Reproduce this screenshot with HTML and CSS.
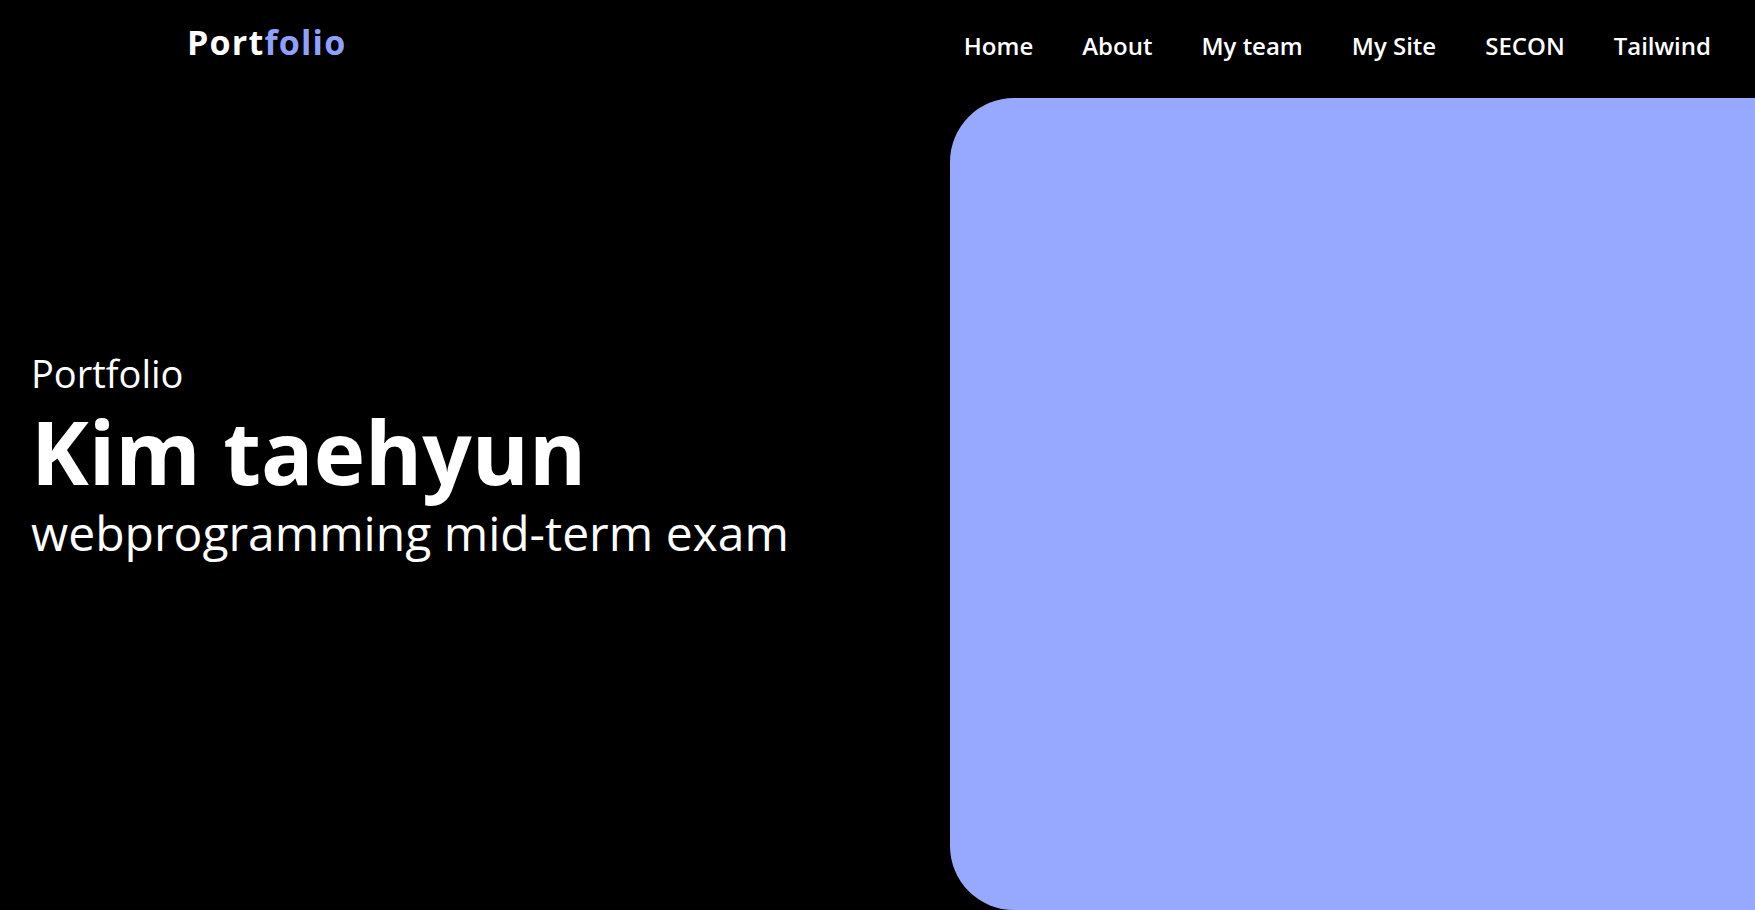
FILE: index.html
```html
<!DOCTYPE html>
<html lang="en">
<head>
<meta charset="utf-8">
<title>Portfolio</title>
<link rel="stylesheet" href="styles.css">
</head>
<body>
<header class="header">
  <a class="logo" href="#">Port<span class="logo-accent">folio</span></a>
  <nav class="nav">
    <a class="nav-link" href="#">Home</a>
    <a class="nav-link" href="#">About</a>
    <a class="nav-link" href="#">My team</a>
    <a class="nav-link" href="#">My Site</a>
    <a class="nav-link" href="#">SECON</a>
    <a class="nav-link" href="#">Tailwind</a>
  </nav>
</header>
<main class="hero">
  <section class="hero-text">
    <p class="hero-kicker">Portfolio</p>
    <h1 class="hero-name">Kim taehyun</h1>
    <p class="hero-sub">webprogramming mid-term exam</p>
  </section>
  <div class="hero-card"></div>
</main>
</body>
</html>
```

FILE: styles.css
```css
* { box-sizing: border-box; }
html, body {
  margin: 0;
  padding: 0;
  background: #000;
  color: #fff;
  font-family: "Open Sans", "Noto Sans", sans-serif;
  overflow: hidden;
}
.header {
  height: 98px;
  display: flex;
  align-items: baseline;
  justify-content: space-between;
  padding: 25px 44px 0 187px;
}
.logo {
  font-size: 34px;
  line-height: 1;
  font-weight: 700;
  letter-spacing: 1.2px;
  color: #fff;
  text-decoration: none;
}
.logo-accent { color: #8fa1ff; }
.nav {
  display: flex;
  gap: 49px;
}
.nav-link {
  font-size: 24px;
  line-height: 1;
  font-weight: 600;
  color: #fff;
  text-decoration: none;
}
.hero {
  display: grid;
  grid-template-columns: 950px 1fr;
  height: 812px;
}
.hero-text {
  padding: 256px 0 0 31px;
}
.hero-kicker {
  margin: 0;
  font-size: 38px;
  line-height: 1;
  font-weight: 400;
}
.hero-name {
  margin: 16px 0 0;
  font-size: 87px;
  line-height: 1;
  font-weight: 700;
}
.hero-sub {
  margin: 14px 0 0;
  font-size: 48px;
  line-height: 1;
  font-weight: 400;
}
.hero-card {
  background: #97a9ff;
  border-radius: 64px 0 0 64px;
  height: 812px;
}
```
